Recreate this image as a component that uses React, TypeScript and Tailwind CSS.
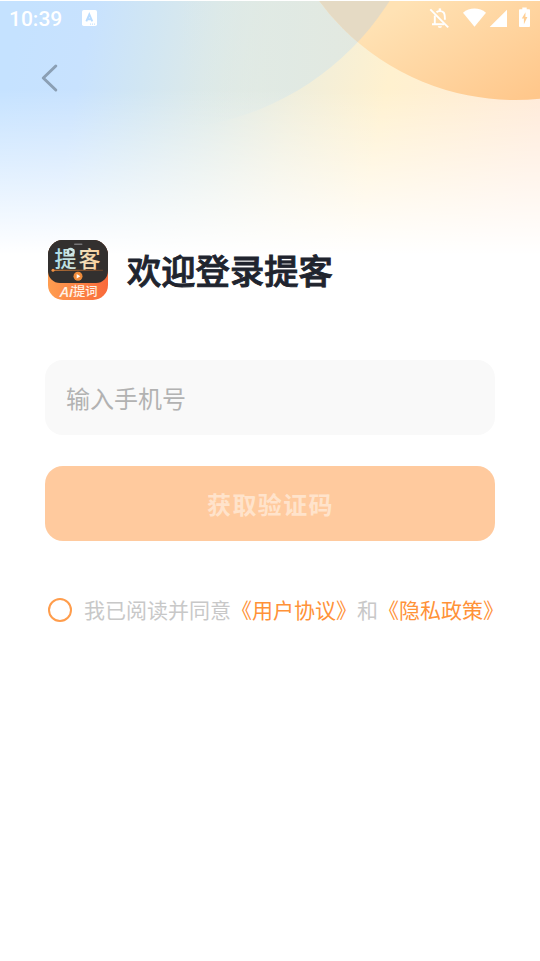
import { useState } from 'react'

function Backdrop() {
  return (
    <svg className="absolute inset-x-0 top-0 -z-10 h-[260px] w-[540px]" viewBox="0 0 540 260" fill="none">
      <defs>
        <linearGradient id="sky" gradientUnits="userSpaceOnUse" x1="0" y1="0" x2="540" y2="110">
          <stop offset="0.04" stopColor="#c5e2ff" />
          <stop offset="0.17" stopColor="#c8e2fe" />
          <stop offset="0.28" stopColor="#d1e6f3" />
          <stop offset="0.42" stopColor="#dfeae7" />
          <stop offset="0.56" stopColor="#f0eedb" />
          <stop offset="0.72" stopColor="#fff1cf" />
          <stop offset="1" stopColor="#ffead8" />
        </linearGradient>
        {/* fades in from the left so the circle only shows an edge on its right side */}
        <linearGradient id="bubble" gradientUnits="userSpaceOnUse" x1="180" y1="0" x2="390" y2="0">
          <stop offset="0" stopColor="#dae9e9" stopOpacity="0" />
          <stop offset="0.5" stopColor="#dfe9e4" stopOpacity="0.9" />
          <stop offset="1" stopColor="#e3e8df" />
        </linearGradient>
        <linearGradient id="sun" gradientUnits="userSpaceOnUse" x1="410" y1="0" x2="490" y2="125">
          <stop offset="0" stopColor="#ffe2b4" />
          <stop offset="1" stopColor="#ffc78b" />
        </linearGradient>
        <linearGradient id="fade" x1="0" y1="0" x2="0" y2="1">
          <stop offset="0.34" stopColor="#fff" stopOpacity="0" />
          <stop offset="0.65" stopColor="#fff" stopOpacity="0.48" />
          <stop offset="0.98" stopColor="#fff" />
        </linearGradient>
        <clipPath id="bubbleClip">
          <circle cx="156" cy="-147" r="276.5" />
        </clipPath>
      </defs>
      <rect width="540" height="260" fill="url(#sky)" />
      <circle cx="156" cy="-147" r="276.5" fill="url(#bubble)" />
      <rect width="540" height="260" fill="url(#fade)" />
      <circle cx="515" cy="-143" r="243" fill="url(#sun)" />
      <circle cx="515" cy="-143" r="243" fill="#e3d9c6" fillOpacity="0.92" clipPath="url(#bubbleClip)" />
      <rect width="540" height="1" fill="#fff" />
    </svg>
  )
}

function StatusBar() {
  return (
    <div className="flex h-9 items-center justify-between pr-[9px] pl-[9px] text-white">
      <div className="flex items-center gap-5">
        <span className="pt-[2px] font-['Roboto',sans-serif] text-[21px] leading-none font-medium">10:39</span>
        <svg width="15" height="16" viewBox="0 0 15 16">
          <rect width="15" height="16" rx="1.8" fill="#fff" />
          <path d="M4.3 11.4 7.3 4.5l3 6.9M5.4 9.2h3.9" fill="none" stroke="#b9dcff" strokeWidth="1.9" />
          <path d="M8 14.1h5" stroke="#b9dcff" strokeWidth="1" strokeDasharray="1 1" />
        </svg>
      </div>
      <svg width="102" height="22" viewBox="429 7 102 22" fill="#fff">
        <g fill="none" stroke="#fff" strokeWidth="1.9">
          <path d="M430.3 9.4l17.9 18" />
          <path d="M434.8 15.4v8.7M432 24.3h12.3M436.5 12.3c1.6-1.5 5.4-1.6 7.1.2 1.4 1.5 1.3 3.2 1.3 7.3" />
          <path d="M439.9 8.4v3" strokeWidth="2.4" />
        </g>
        <path d="M437.9 26.2h4c0 2.2-4 2.2-4 0z" />
        <path d="M463 12.8c6.5-5.6 16.4-5.6 23 0L474.5 26.7z" />
        <path d="M507 9.8V27h-17.3z" />
        <path d="M522.3 7.5h4.4v1.8h2.2c.7 0 1.1.5 1.1 1.1v15.5c0 .6-.5 1.1-1.1 1.1h-8.8c-.6 0-1.1-.5-1.1-1.1V10.4c0-.6.5-1.1 1.1-1.1h2.2z" />
        <path d="M525.5 12.3l-3.7 6.2h2.1v5.8l3.5-7.3h-2z" fill="#ffcf94" />
      </svg>
    </div>
  )
}

function AppLogo() {
  return (
    <svg width="60" height="60" viewBox="0 0 60 60" className="shrink-0">
      <defs>
        <linearGradient id="logoBase" x1="0" y1="0" x2="1" y2="0">
          <stop stopColor="#ff9d50" />
          <stop offset="1" stopColor="#f9693a" />
        </linearGradient>
        <linearGradient id="logoName" x1="0" y1="0" x2="1" y2="0">
          <stop stopColor="#a9dcea" />
          <stop offset="0.45" stopColor="#cfe2d8" />
          <stop offset="0.6" stopColor="#f3dfba" />
          <stop offset="1" stopColor="#f8d09b" />
        </linearGradient>
        <linearGradient id="logoLine" gradientUnits="userSpaceOnUse" x1="4" y1="0" x2="56" y2="0">
          <stop stopColor="#ef8b3a" />
          <stop offset="1" stopColor="#6f4125" />
        </linearGradient>
        <clipPath id="logoClip">
          <rect width="60" height="60" rx="15" />
        </clipPath>
      </defs>
      <g clipPath="url(#logoClip)">
        <rect width="60" height="60" fill="url(#logoBase)" />
        <rect width="60" height="44" y="-1" rx="12" fill="#33302f" />
        <rect y="0" width="60" height="20" fill="#33302f" />
        <rect x="26" y="3.5" width="8.5" height="1.6" rx="0.8" fill="#777678" />
        <text
          x="6.6"
          y="26.8"
          textLength="46"
          fontSize="22"
          fontWeight="500"
          fill="url(#logoName)"
          className="font-['Noto_Sans_CJK_SC',sans-serif]"
        >
          提客
        </text>
        <circle cx="22.6" cy="12" r="4.2" fill="#cbe7e7" />
        <path d="M21.4 9.8v4.4l3.6-2.2z" fill="#33302f" />
        <rect x="5" y="29.8" width="50" height="0.9" fill="url(#logoLine)" />
        <circle cx="5" cy="30.2" r="1.5" fill="#f49243" />
        <circle cx="30" cy="36.3" r="4.5" fill="#ef8b3b" />
        <path d="M28.7 34.1v4.4l3.6-2.2z" fill="#fff" />
        <text
          x="12"
          y="56.8"
          fontSize="15"
          fontWeight="600"
          fontStyle="italic"
          fill="#fff2e6"
          className="font-['Open_Sans',sans-serif]"
        >
          Ai
        </text>
        <text
          x="25"
          y="56"
          fontSize="12.3"
          fontWeight="500"
          fill="#fff2e6"
          className="font-['Noto_Sans_CJK_SC',sans-serif]"
        >
          提词
        </text>
      </g>
    </svg>
  )
}

export default function App() {
  const [phone, setPhone] = useState('')
  const [agreed, setAgreed] = useState(false)

  return (
    <main className="relative isolate h-[961px] w-[540px] overflow-hidden bg-white font-['Noto_Sans_CJK_SC',sans-serif]">
      <Backdrop />
      <StatusBar />

      <button className="mt-[27px] ml-10 block h-[30px] w-5" aria-label="返回">
        <svg width="20" height="30" viewBox="0 0 20 30" fill="none">
          <path d="M15.8 3 3.3 15l12.5 12" stroke="#8b9fb4" strokeWidth="3" strokeLinecap="round" strokeLinejoin="round" />
        </svg>
      </button>

      <div className="mt-[147px] flex items-center gap-[19px] pl-12">
        <AppLogo />
        <h1 className="pb-[2px] text-[34.3px] leading-[58px] font-medium text-[#20242e] [-webkit-text-stroke:0.9px_#20242e]">
          欢迎登录提客
        </h1>
      </div>

      <div className="mt-[60px] px-[45px]">
        <input
          value={phone}
          onChange={(e) => setPhone(e.target.value)}
          placeholder="输入手机号"
          className="block h-[75px] w-full rounded-[18px] bg-[#f9f9f9] px-[21px] text-2xl text-[#333] outline-none placeholder:text-[#b2b2b2]"
        />
        <button className="mt-[30.5px] block h-[75px] w-full rounded-[18px] bg-[#ffca9e] pt-px pl-px text-2xl font-bold tracking-[1.4px] text-[#ffe3cb]">
          获取验证码
        </button>
      </div>

      <div className="mt-[53.5px] flex items-center pl-12 text-[21px] leading-[30px] whitespace-nowrap text-[#c8c8c8]">
        <button
          onClick={() => setAgreed(!agreed)}
          aria-label="同意协议"
          className={`mt-px mr-3 size-6 shrink-0 rounded-full border-2 border-[#ff9d4c] ${agreed ? 'bg-[#ff9d4c]' : ''}`}
        />
        <span>我已阅读并同意</span>
        <span className="text-[#ff9238]">《用户协议》</span>
        <span>和</span>
        <span className="text-[#ff9238]">《隐私政策》</span>
      </div>
    </main>
  )
}
